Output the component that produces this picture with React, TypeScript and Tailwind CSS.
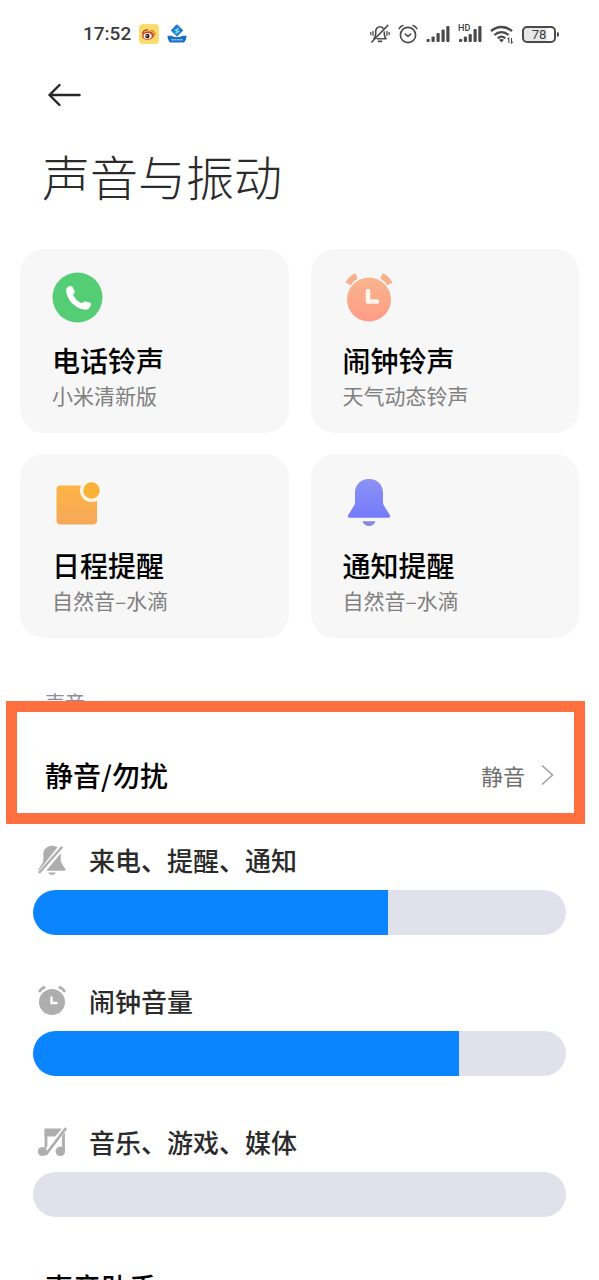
import React, { useState } from "react";

const WeiboIcon = () => (
  <svg width="20" height="20" viewBox="0 0 20 20" aria-hidden="true">
    <rect width="20" height="20" rx="4" fill="#fbdc6b" />
    <ellipse cx="9" cy="11.5" rx="6" ry="4.3" fill="#c8452b" transform="rotate(-8 9 11.5)" />
    <ellipse cx="8.6" cy="11.9" rx="4.1" ry="2.9" fill="#fff" />
    <circle cx="8.4" cy="12" r="2.2" fill="#3a1d14" />
    <circle cx="7.8" cy="11.6" r="0.7" fill="#fff" />
    <path d="M11.6 6.6a3.6 3.6 0 0 1 4.2 4.3" fill="none" stroke="#d98a2b" strokeWidth="1.4" strokeLinecap="round" />
    <path d="M3.6 9.2C4.4 7 6.6 5.6 8.6 5.9" fill="none" stroke="#a8442b" strokeWidth="1.3" strokeLinecap="round" />
  </svg>
);

const BoatIcon = () => (
  <svg width="20" height="20" viewBox="0 0 20 20" aria-hidden="true">
    <path d="M10 1.5 15 6.4 10 11.300 5 6.400Z" fill="#1f7fd0" stroke="#1f7fd0" strokeWidth="2" strokeLinejoin="round" />
    <path d="M11.8 4.4 8.6 6.2l2.8 1.4-3 1.8" fill="none" stroke="#8fe0f5" strokeWidth="1.3" />
    <path d="M.4 11.8h4.200c2 1.600 8.800 1.600 10.800 0h4.200c-.2 3-1.200 5.200-2.600 6.800H3C1.600 17 .6 14.800.4 11.800Z" fill="#1c6fc4" />
    <path d="M4.500 15.700h11" stroke="#9fd0f2" strokeWidth="1.600" strokeDasharray="2 1" />
  </svg>
);

const MutedBellStatus = () => (
  <svg width="20" height="20" viewBox="0 0 20 20" fill="none" stroke="#4a4a4a" strokeWidth="1.600" strokeLinecap="round" strokeLinejoin="round" aria-hidden="true">
    <path d="M4 14.600c1.200-1.200 1.700-2.600 1.700-4.600V7.400C5.700 4.700 7.500 2.800 10 2.800c1.300 0 2.400.5 3.100 1.300" />
    <path d="M14.300 8v2c0 2 .5 3.400 1.700 4.700H7.200" />
    <path d="M8.400 17.400h3.200M17.800 1.400 1.800 18" />
    <path d="M3 7.400v4M.8 8.500v2M17 7.400v4M19.200 8.500v2" strokeWidth="1.300" />
  </svg>
);

const AlarmStatus = () => (
  <svg width="20" height="20" viewBox="0 0 20 20" fill="none" stroke="#4a4a4a" strokeWidth="1.600" strokeLinecap="round" strokeLinejoin="round" aria-hidden="true">
    <circle cx="10" cy="11" r="7.600" />
    <path d="m7.300 10.200 2.700 2.300 2.700-2.300M1.200 4.600C2 3 3.200 2 4.900 1.500M18.800 4.600C18 3 16.800 2 15.100 1.500" />
  </svg>
);

const SignalBars = () => (
  <svg width="24" height="18" viewBox="0 0 24 18" fill="#4a4a4a" aria-hidden="true">
    <rect x="0.500" y="14" width="3.200" height="3" rx="1" />
    <rect x="5.500" y="11.500" width="3.200" height="5.500" rx="1" />
    <rect x="10.500" y="8" width="3.200" height="9" rx="1" />
    <rect x="15.500" y="4.500" width="3.200" height="12.500" rx="1" />
    <rect x="20.300" y="1" width="3.200" height="16" rx="1" />
  </svg>
);

const HdSignal = () => (
  <span className="relative flex">
    <svg width="24" height="18" viewBox="0 0 24 18" fill="#4a4a4a" aria-hidden="true">
      <rect x="1" y="14" width="3.200" height="3" rx="1" />
      <rect x="5.800" y="11.500" width="3.200" height="5.500" rx="1" />
      <rect x="10.600" y="9" width="3.200" height="8" rx="1" />
      <rect x="15.500" y="4" width="3.200" height="13" rx="1" />
      <rect x="20.300" y="1" width="3.200" height="16" rx="1" />
    </svg>
    <span className="absolute -top-[2px] left-0 text-[9px] leading-[10px] font-medium">HD</span>
  </span>
);

const WifiStatus = () => (
  <svg width="24" height="20" viewBox="0 0 24 20" fill="none" stroke="#4a4a4a" strokeWidth="2.300" aria-hidden="true">
    <path d="M1 7.200c6-5.600 15-5.600 21 0M4.400 11c4.200-3.900 10-3.900 14.200 0M7.800 14.300c2.200-2 5.200-2 7.400 0" />
    <path d="M9 15.800c1.500-1.200 3.500-1.200 5 0L11.500 18.500Z" fill="#4a4a4a" stroke="none" />
    <path d="M18.800 19v-5l-1.200 1.200M21.500 14v5l1.200-1.200" strokeWidth="1.100" />
  </svg>
);

const Battery = () => (
  <span className="flex items-center gap-px">
    <span className="flex h-[17px] w-[34px] items-center justify-center rounded-[5px] border-2 border-[#4a4a4a] bg-linear-to-r from-gray-200 from-78% to-white to-78% text-[13px] leading-[13px]">
      78
    </span>
    <span className="h-[5px] w-[2px] rounded-r-sm bg-[#4a4a4a]" />
  </span>
);

const PhoneIcon = () => (
  <svg width="52" height="52" viewBox="0 0 52 52" aria-hidden="true">
    <circle cx="25.500" cy="25.500" r="25" fill="#54cd75" />
    <path d="M15.200 15.600c1.400-1.800 4-2.200 5.300-.5l1.900 3.300c.6 1.200.4 2.200-.5 3.100-.7.800-.7 1.500-.2 2.400 1.700 3 3.900 5.200 6.900 6.800.9.500 1.600.4 2.300-.3.700-.9 1.600-1.100 2.700-.8l4 .9c1.300.4 1.500 1.600 1.100 2.900-1 3-3.200 4.700-6.600 4.200C23 36 16.500 29.300 14.300 20.800c-.4-2-.2-3.900.9-5.200Z" fill="#fff" />
  </svg>
);

const AlarmIcon = () => (
  <svg width="52" height="52" viewBox="0 0 52 52" aria-hidden="true">
    <defs>
      <linearGradient id="alarm" x1="0" y1="0" x2="0" y2="1">
        <stop offset="0" stopColor="#f8b58d" />
        <stop offset="1" stopColor="#ff9c86" />
      </linearGradient>
    </defs>
    <circle cx="26" cy="27.500" r="22" fill="url(#alarm)" />
    <path d="M5.300 12C7 8 9.700 5.700 13.500 4M46.700 12C45 8 42.300 5.700 38.500 4" fill="none" stroke="#f6b08c" strokeWidth="6" />
    <path d="M25 19v10.500h9" fill="none" stroke="#fff6ee" strokeWidth="4.600" strokeLinecap="round" strokeLinejoin="round" />
  </svg>
);

const ScheduleIcon = () => (
  <svg width="52" height="52" viewBox="0 0 52 52" aria-hidden="true">
    <defs>
      <linearGradient id="schedule" x1="0" y1="0" x2="0" y2="1">
        <stop offset="0" stopColor="#fdb443" />
        <stop offset="1" stopColor="#f6a85b" />
      </linearGradient>
    </defs>
    <rect x="4.500" y="8.500" width="40.500" height="39" rx="4" fill="url(#schedule)" />
    <circle cx="39.500" cy="13.500" r="11.500" fill="#fdf6e6" />
    <path d="M45 1h7v26h-7zM27 0h19v8.300H27z" fill="#f7f7f7" />
    <circle cx="39.500" cy="13.500" r="8.200" fill="#fab135" />
  </svg>
);

const BellIcon = () => (
  <svg width="52" height="52" viewBox="0 0 52 52" aria-hidden="true">
    <defs>
      <linearGradient id="bell" x1="0" y1="0" x2="0" y2="1">
        <stop offset="0" stopColor="#8a92f4" />
        <stop offset="1" stopColor="#757bfb" />
      </linearGradient>
    </defs>
    <path d="M26 2c8.500 0 14 6 14 13.500V25c0 2 .7 3.500 1.800 5l5 8c.9 1.500.2 2.700-1.400 2.700H6.600c-1.600 0-2.300-1.200-1.400-2.700l5-8c1.100-1.500 1.800-3 1.800-5v-9.500C12 8 17.500 2 26 2Z" fill="url(#bell)" />
    <path d="M19.500 44.300h13c-.8 3-3.400 4.800-6.500 4.800s-5.700-1.800-6.500-4.800Z" fill="#8489e4" />
  </svg>
);

const BellOffIcon = () => (
  <svg width="30" height="32" viewBox="0 0 30 32" fill="#aeaeae" aria-hidden="true">
    <path d="M20.500 3.500C19 2.400 17.200 1.800 15 1.800 9.800 1.800 6.300 5.500 6.300 10v6c0 1.500-.5 2.800-1.300 4L1.500 25.200c-.3.600-.2 1.100.2 1.500Z" />
    <path d="M25.300 2.800 2 29" stroke="#aeaeae" strokeWidth="2.400" />
    <path d="M23.800 9.200V16c0 1.500.5 2.800 1.300 4l3.300 5c.5.900.1 1.700-.9 1.700H9.200Z" />
    <path d="M11.300 28.500h7.600c-.6 1.400-2 2.300-3.800 2.300s-3.200-.9-3.800-2.300Z" />
  </svg>
);

const AlarmOffIcon = () => (
  <svg width="30" height="32" viewBox="0 0 30 32" aria-hidden="true">
    <circle cx="15" cy="17" r="13" fill="#aeaeae" />
    <path d="M2 7C3.500 4.500 5.600 2.800 8.200 2M28 7C26.500 4.500 24.400 2.800 21.800 2" fill="none" stroke="#aeaeae" strokeWidth="2.600" />
    <path d="M14.500 12.500v5.500h5" fill="none" stroke="#fff" strokeWidth="2.400" strokeLinecap="round" />
  </svg>
);

const MusicOffIcon = () => (
  <svg width="30" height="32" viewBox="0 0 30 32" aria-hidden="true">
    <path d="M9 25.500V5h17.500v19" fill="none" stroke="#aeaeae" strokeWidth="2.800" />
    <path d="M7.600 2.500h19L21 10.500H7.600Z" fill="#aeaeae" />
    <circle cx="23.400" cy="25.300" r="4.800" fill="#aeaeae" />
    <path d="M27.600 3 7 28.500" stroke="#fff" strokeWidth="5" />
    <circle cx="5.500" cy="25.500" r="4.600" fill="#aeaeae" />
    <path d="M29 2 8.500 29" stroke="#aeaeae" strokeWidth="2.800" />
  </svg>
);

const ringtones = [
  { title: "电话铃声", value: "小米清新版", icon: <PhoneIcon /> },
  { title: "闹钟铃声", value: "天气动态铃声", icon: <AlarmIcon /> },
  { title: "日程提醒", value: "自然音–水滴", icon: <ScheduleIcon /> },
  { title: "通知提醒", value: "自然音–水滴", icon: <BellIcon /> },
];

const MAX_VOLUME = 15;

const VolumeSlider: React.FC<{
  id: string;
  label: string;
  icon: React.ReactNode;
  initial: number;
}> = ({ id, label, icon, initial }) => {
  const [volume, setVolume] = useState(initial);
  const percent = (volume / MAX_VOLUME) * 100;

  return (
    <div className="flex flex-col gap-3">
      <label htmlFor={id} className="flex h-9 items-center gap-[22px] pl-1 text-[26px] leading-9 font-medium text-[#2b2b2b]">
        {icon}
        {label}
      </label>
      <input
        id={id}
        type="range"
        min={0}
        max={MAX_VOLUME}
        value={volume}
        onChange={(e) => setVolume(Number(e.target.value))}
        className="h-[45px] w-full cursor-pointer appearance-none rounded-full [&::-webkit-slider-thumb]:appearance-none [&::-webkit-slider-thumb]:opacity-0"
        style={{
          background: `linear-gradient(to right, #0b84ff ${percent}%, #e1e1ec ${percent}%)`,
        }}
      />
    </div>
  );
};

const App: React.FC = () => {
  return (
    <div className="h-screen overflow-y-auto bg-white font-['Noto_Sans_CJK_SC',sans-serif] text-black [scrollbar-width:none]">
      <header className="flex h-[68px] items-center justify-between pr-10 pl-[83px] font-['Roboto',sans-serif] text-[#3c3c3c]">
        <div className="flex items-center gap-2">
          <span className="text-[19px] font-medium">17:52</span>
          <WeiboIcon />
          <BoatIcon />
        </div>
        <div className="flex items-center gap-2">
          <MutedBellStatus />
          <AlarmStatus />
          <SignalBars />
          <HdSignal />
          <WifiStatus />
          <Battery />
        </div>
      </header>

      <button type="button" aria-label="返回" className="ml-12 flex h-[54px] items-center">
        <svg width="34" height="24" viewBox="0 0 34 24" fill="none" stroke="#262626" strokeWidth="2.400" strokeLinecap="round" strokeLinejoin="round">
          <path d="M31.500 12H1.500M11.500 2 1.500 12l10 10" />
        </svg>
      </button>

      <h1 className="mt-[18px] ml-[42px] text-[48px] leading-[70px] font-light text-[#2b2b2b]">声音与振动</h1>

      <div className="mt-[39px] grid grid-cols-2 gap-x-[22px] gap-y-[21px] px-5">
        {ringtones.map((item) => (
          <button
            key={item.title}
            type="button"
            className="flex h-[184px] flex-col items-start rounded-3xl bg-[#f7f7f7] px-8 pt-[23px] text-left"
          >
            {item.icon}
            <span className="mt-4 text-[28px] leading-10 font-medium">{item.title}</span>
            <span className="text-[21px] leading-[30px] text-[#808080]">{item.value}</span>
          </button>
        ))}
      </div>

      <section>
        <h2 className="mt-[50px] ml-[45px] text-xl leading-[30px] text-[#8c8ca0]">声音</h2>
        {/* highlighted entry, its frame covers the lower half of the section title */}
        <button
          type="button"
          className="relative -mt-[17px] mr-[14px] ml-[6px] flex h-[123px] w-[calc(100%-20px)] items-center justify-between border-[11px] border-[#ff6f3f] bg-white pt-6 pr-5 pl-7"
        >
          <span className="text-[28px] leading-10 font-medium">静音/勿扰</span>
          <span className="flex items-center gap-4 text-[22px] leading-8 text-[#6e6e6e]">
            静音
            <svg width="13" height="22" viewBox="0 0 13 22" fill="none" stroke="#a0a0a0" strokeWidth="1.600" aria-hidden="true">
              <path d="m1 1.500 10.500 9.500L1 20.500" />
            </svg>
          </span>
        </button>

        <div className="mt-[18px] flex flex-col gap-12 px-[33px]">
          <VolumeSlider id="ring" label="来电、提醒、通知" icon={<BellOffIcon />} initial={10} />
          <VolumeSlider id="alarm-volume" label="闹钟音量" icon={<AlarmOffIcon />} initial={12} />
          <VolumeSlider id="media" label="音乐、游戏、媒体" icon={<MusicOffIcon />} initial={0} />
        </div>
        <h3 className="mt-[50px] ml-[45px] text-[28px] leading-10 font-medium">声音助手</h3>
      </section>
    </div>
  );
};

export default App;
